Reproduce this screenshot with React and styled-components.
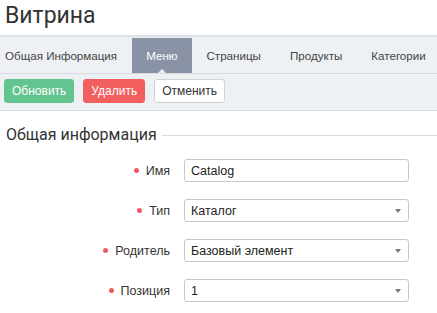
import React from 'react';
import styled, { createGlobalStyle } from 'styled-components';

const Global = createGlobalStyle`
  html, body {
    margin: 0;
    padding: 0;
    background: #fff;
    font-family: "Liberation Sans", Arial, sans-serif;
    color: #333;
  }
  * { box-sizing: border-box; }
`;

const tabs = ['Общая Информация', 'Меню', 'Страницы', 'Продукты', 'Категории'];

const fields = [
  { label: 'Имя', value: 'Catalog', kind: 'input' },
  { label: 'Тип', value: 'Каталог', kind: 'select' },
  { label: 'Родитель', value: 'Базовый элемент', kind: 'select' },
  { label: 'Позиция', value: '1', kind: 'select' },
];

function App() {
  return (
    <Page>
      <Global />
      <Header>
        <Title>Витрина</Title>
      </Header>
      <TabBar>
        {tabs.map((t, i) => (
          <Tab key={t} $active={t === 'Меню'} $first={i === 0}>
            {t}
          </Tab>
        ))}
      </TabBar>
      <Toolbar>
        <Button $variant="save">Обновить</Button>
        <Button $variant="delete">Удалить</Button>
        <Button $variant="cancel">Отменить</Button>
      </Toolbar>
      <Section>
        <Legend>
          <span>Общая информация</span>
          <Rule />
        </Legend>
        <Form>
          {fields.map(f => (
            <Row key={f.label}>
              <Label>
                <Dot />
                {f.label}
              </Label>
              <Field>
                {f.value}
                {f.kind === 'select' && <Caret />}
              </Field>
            </Row>
          ))}
        </Form>
      </Section>
    </Page>
  );
}

const Page = styled.div`
  width: 437px;
  height: 313px;
  overflow: hidden;
`;

const Header = styled.header`
  height: 37px;
  padding-left: 5px;
  border-bottom: 2px solid #dce1e6;
  display: flex;
  align-items: center;
`;

const Title = styled.h1`
  margin: 0;
  font-family: Roboto, "Liberation Sans", sans-serif;
  font-weight: 400;
  font-size: 23px;
  color: #333;
  line-height: 1;
  padding-bottom: 4px;
`;

const TabBar = styled.nav`
  height: 37px;
  background: #eef1f4;
  border-bottom: 1px solid #d6dce1;
  display: flex;
  padding-top: 1px;
  white-space: nowrap;
`;

const Tab = styled.div`
  position: relative;
  flex-shrink: 0;
  display: flex;
  align-items: center;
  padding-left: ${p => (p.$first ? '5px' : '14.5px')};
  padding-right: 14.5px;
  font-size: 11.6px;
  color: ${p => (p.$active ? '#fff' : '#444')};
  background: ${p => (p.$active ? '#8a93a5' : 'transparent')};

  &::after {
    content: '';
    display: ${p => (p.$active ? 'block' : 'none')};
    position: absolute;
    left: 50%;
    bottom: 0;
    margin-left: -4px;
    border-left: 4px solid transparent;
    border-right: 4px solid transparent;
    border-bottom: 4px solid #eef1f4;
  }
`;

const Toolbar = styled.div`
  height: 37px;
  background: #eef1f4;
  border-bottom: 1px solid #d6dce1;
  display: flex;
  align-items: center;
  gap: 9px;
  padding: 0 4px 2px;
`;

const variants = {
  save: { bg: '#62c48e', border: '#62c48e', color: '#fff' },
  delete: { bg: '#f25f5f', border: '#f25f5f', color: '#fff' },
  cancel: { bg: '#fff', border: '#cfd3d7', color: '#333' },
};

const Button = styled.button`
  height: 24px;
  padding: 0 7px;
  border-radius: 3px;
  font-family: "Liberation Sans", Arial, sans-serif;
  font-size: 12px;
  background: ${p => variants[p.$variant].bg};
  border: 1px solid ${p => variants[p.$variant].border};
  color: ${p => variants[p.$variant].color};
`;

const Section = styled.section`
  padding: 12px 0 0 6px;
`;

const Legend = styled.div`
  display: flex;
  align-items: center;
  gap: 5px;
  font-family: Roboto, "Liberation Sans", sans-serif;
  font-size: 16px;
  color: #333;
  height: 22px;
`;

const Rule = styled.div`
  flex: 1;
  height: 1px;
  background: #d6dce1;
  margin-top: 2px;
`;

const Form = styled.div`
  display: flex;
  flex-direction: column;
  gap: 17px;
  padding-top: 14px;
`;

const Row = styled.div`
  display: grid;
  grid-template-columns: 164px 225px;
  column-gap: 14px;
  align-items: center;
`;

const Label = styled.div`
  display: flex;
  align-items: center;
  justify-content: flex-end;
  font-size: 12.5px;
  color: #333;
`;

const Dot = styled.span`
  width: 5px;
  height: 5px;
  border-radius: 50%;
  background: #ee5a5f;
  margin-right: 7px;
`;

const Field = styled.div`
  position: relative;
  height: 23px;
  border: 1px solid #c6c9cc;
  border-radius: 3px;
  padding: 0 6px;
  display: flex;
  align-items: center;
  font-size: 12.5px;
  color: #222;
  background: #fff;
`;

const Caret = styled.span`
  position: absolute;
  right: 7px;
  top: 9px;
  border-left: 3.5px solid transparent;
  border-right: 3.5px solid transparent;
  border-top: 4px solid #777;
`;

export default App;
